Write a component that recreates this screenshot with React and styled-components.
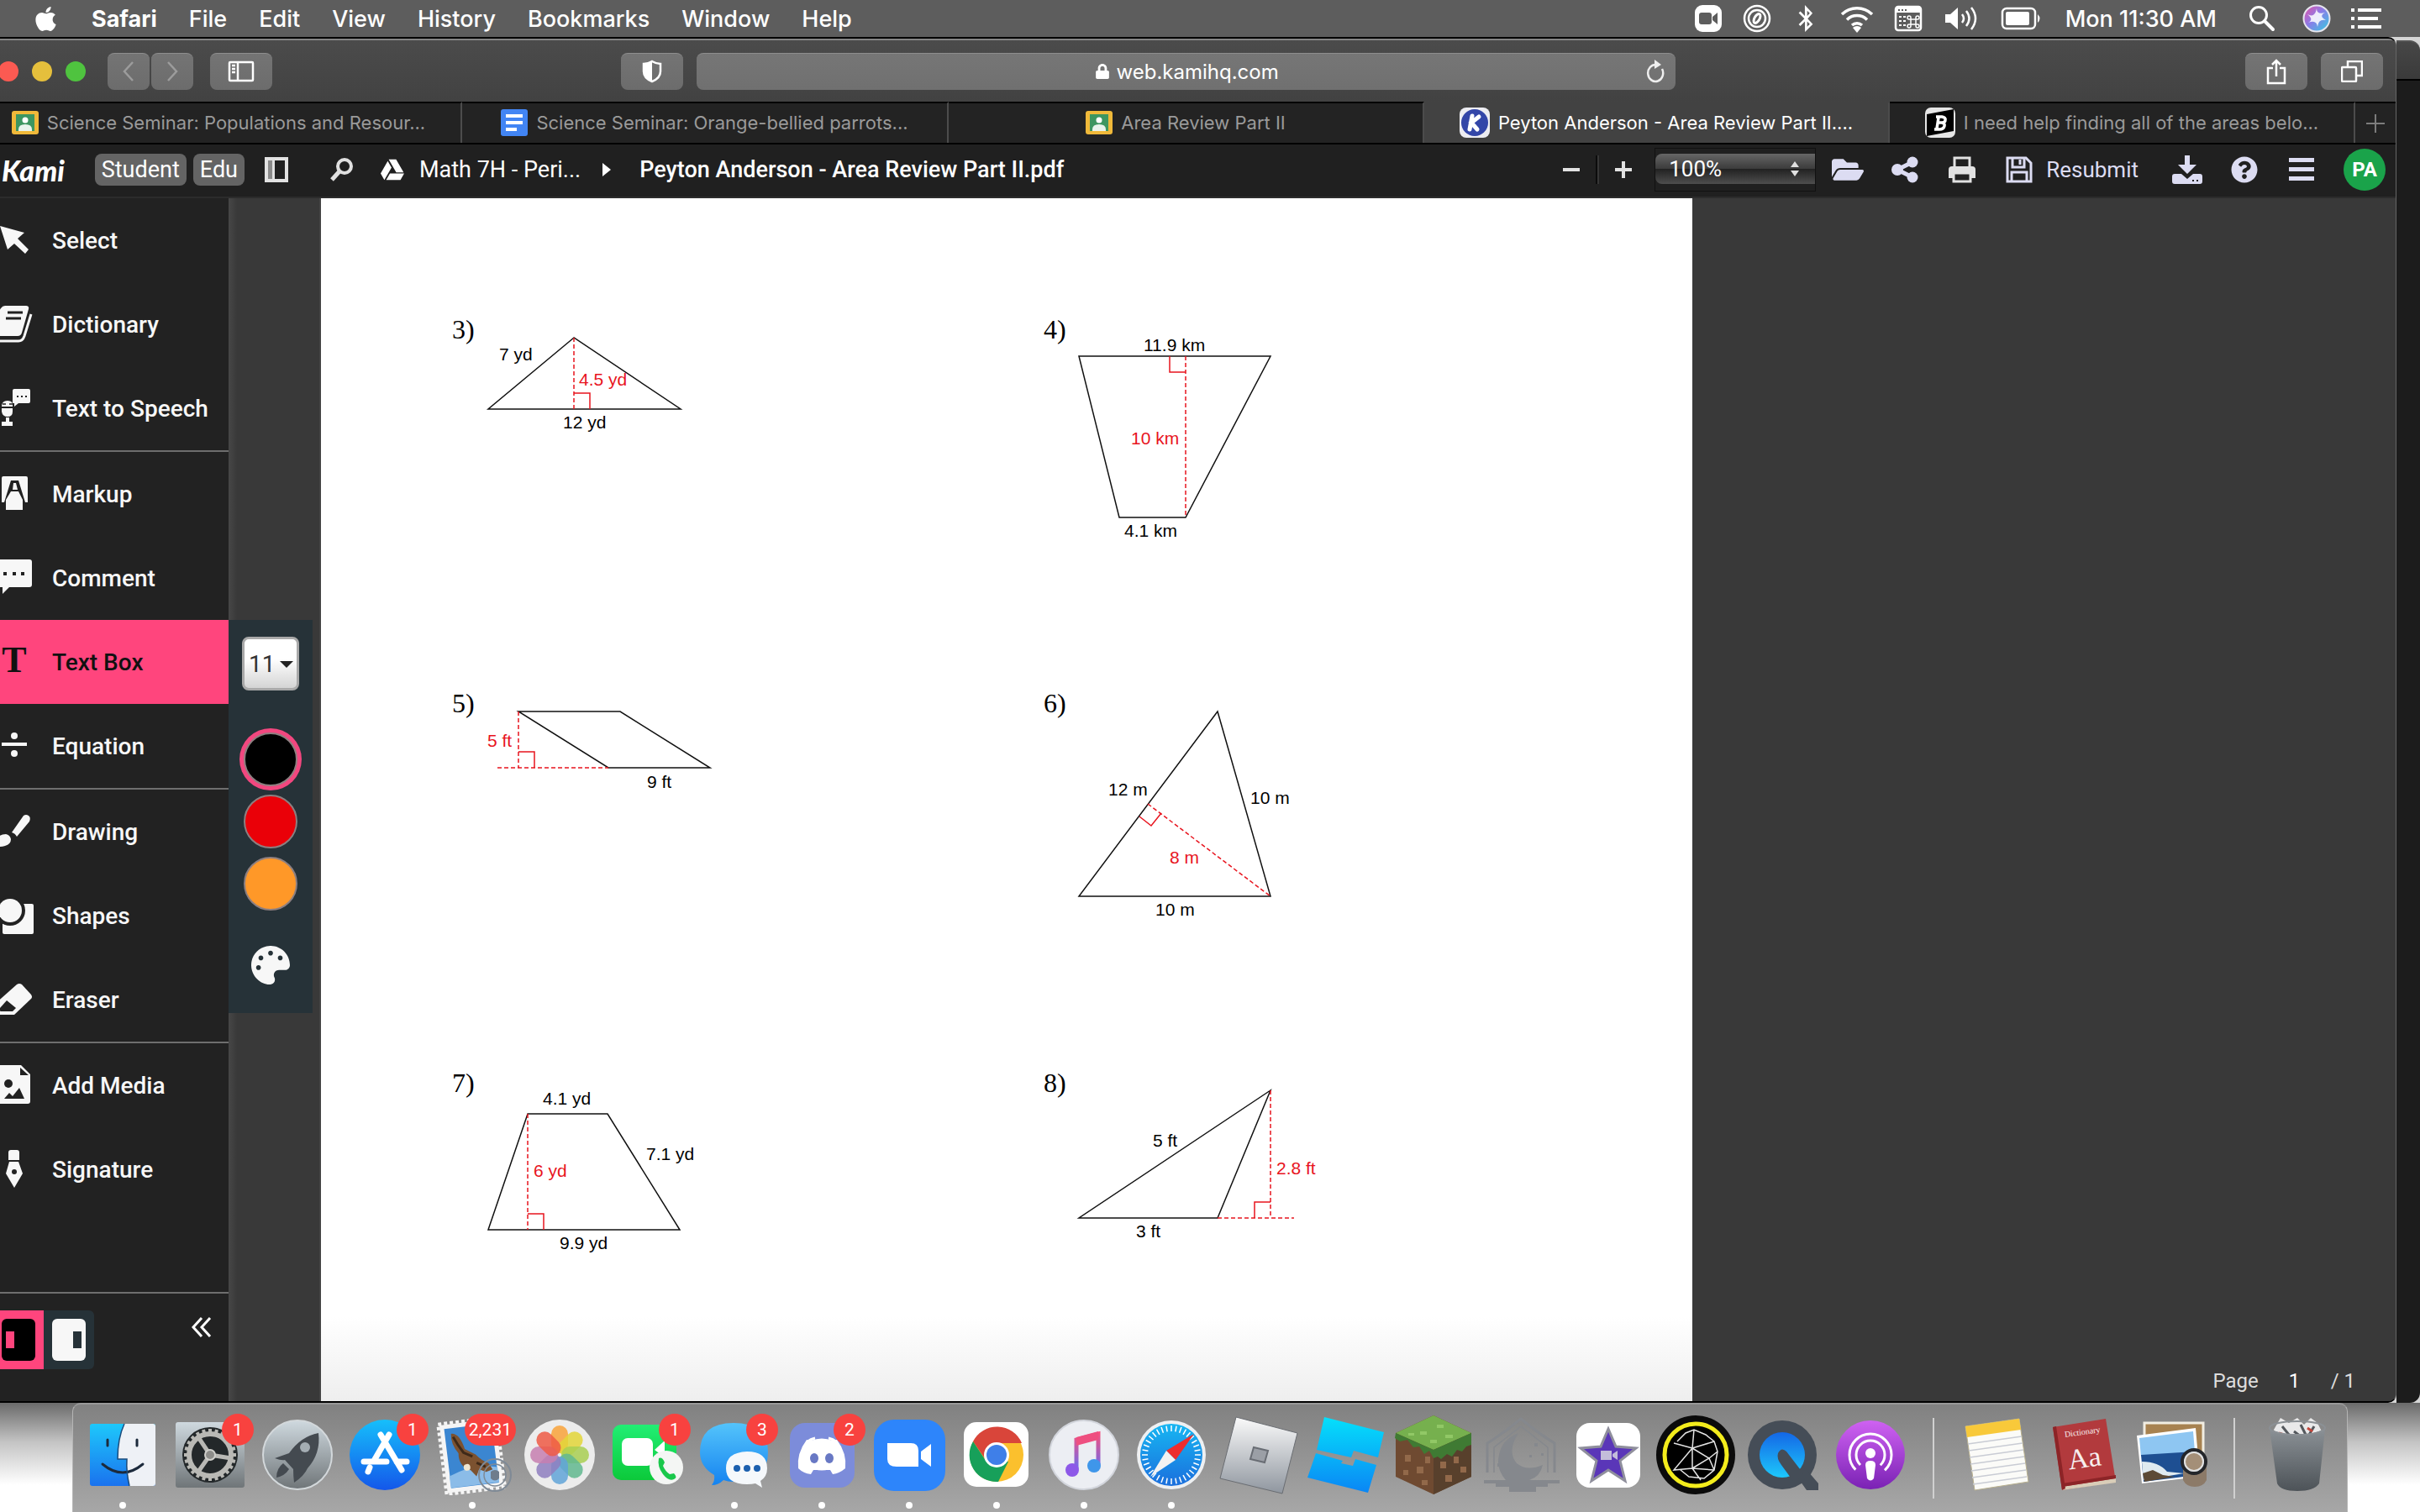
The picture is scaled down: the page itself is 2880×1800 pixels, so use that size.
import React, { useState } from "react";
import styled, { createGlobalStyle } from "styled-components";
import {
  FaApple,
  FaBluetoothB,
  FaFolderOpen,
  FaGoogleDrive,
  FaLock,
  FaPalette,
  FaQuestionCircle,
} from "react-icons/fa";

const MAC_FONT = `Inter, Roboto, sans-serif`;
const APP_FONT = `Roboto, "Liberation Sans", sans-serif`;

const GlobalStyle = createGlobalStyle`
  * {
    box-sizing: border-box;
  }
  body {
    margin: 0;
    background: #ffffff;
    overflow: hidden;
  }
  button, input, select {
    font: inherit;
    color: inherit;
    margin: 0;
    padding: 0;
    border: none;
    background: none;
  }
  a {
    color: inherit;
    text-decoration: none;
  }
  svg {
    display: block;
    flex-shrink: 0;
  }
`;

/* ---------- menu bar ---------- */

const menus = ["File", "Edit", "View", "History", "Bookmarks", "Window", "Help"];

function StatusIcons() {
  return (
    <StatusGroup>
      <svg width="34" height="34" viewBox="0 0 34 34">
        <rect x="1" y="1" width="32" height="32" rx="9" fill="#fff" />
        <rect x="6" y="10" width="15" height="14" rx="3" fill="#5d5d5d" />
        <path d="M22 15l6-5v14l-6-5z" fill="#5d5d5d" />
      </svg>
      <svg width="34" height="34" viewBox="0 0 34 34" fill="none" stroke="#fff">
        <circle cx="17" cy="17" r="15" strokeWidth="2.5" />
        <circle cx="17" cy="17" r="10" strokeWidth="2.5" />
        <ellipse cx="17" cy="17" rx="3" ry="6" strokeWidth="3" transform="rotate(30 17 17)" />
      </svg>
      <StatusSlot $w={34}>
        <FaBluetoothB size={32} />
      </StatusSlot>
      <svg width="40" height="34" viewBox="0 0 40 34" fill="none" stroke="#fff" strokeWidth="3.5">
        <path d="M2 12a26 26 0 0 1 36 0M8 18.500a17 17 0 0 1 24 0M14 25a9 9 0 0 1 12 0" />
        <path d="M20 34l-5-6a7 7 0 0 1 10 0z" fill="#fff" stroke="none" />
      </svg>
      <svg width="34" height="32" viewBox="3 0 34 32">
        <rect x="5" y="2" width="30" height="28" rx="3" fill="none" stroke="#fff" strokeWidth="2.500" />
        <path d="M5 3h30v6H5z" fill="#fff" />
        <path d="M8 5h2v2H8zM12 5h2v2h-2zM16 5h2v2h-2z" fill="#5d5d5d" />
        <path d="M9 13h3v2H9zM14 13h3v2h-3zM9 18h3v2H9zM14 18h3v2h-3zM9 23h3v2H9zM14 23h3v2h-3z" fill="#fff" />
        <path d="M23 17h6v6h-6zM23 17v-2a2 2 0 1 0-2 2zM29 17h2a2 2 0 1 0-2-2zM23 23h-2a2 2 0 1 0 2 2zM29 23v2a2 2 0 1 0 2-2z" fill="none" stroke="#fff" strokeWidth="1.500" />
      </svg>
      <svg width="44" height="34" viewBox="-2 0 44 34">
        <path d="M1 12h6l9-8v26l-9-8H1z" fill="#fff" />
        <path d="M21 12q4 5 0 10M26 8q7 9 0 18M32 4q10 13 0 26" fill="none" stroke="#fff" strokeWidth="2.500" />
      </svg>
      <svg width="54" height="28" viewBox="0 0 54 28">
        <rect x="3" y="2" width="39" height="24" rx="5" fill="none" stroke="#fff" strokeWidth="2.500" />
        <rect x="7" y="6" width="28" height="16" rx="2" fill="#fff" />
        <path d="M45 9q5 5 0 10z" fill="#fff" />
      </svg>
      <time>Mon 11:30 AM</time>
      <svg width="54" height="34" viewBox="-2 0 54 34" fill="none" stroke="#fff" strokeWidth="3">
        <circle cx="24" cy="13" r="9.500" />
        <path d="M31 20l10 10" strokeWidth="4" strokeLinecap="round" />
      </svg>
      <svg width="34" height="34" viewBox="0 0 34 34">
        <defs>
          <linearGradient id="siri" x1="0" y1="0" x2="1" y2="1">
            <stop offset="0" stopColor="#e84ea0" />
            <stop offset="0.45" stopColor="#8c7be8" />
            <stop offset="1" stopColor="#2fd0e0" />
          </linearGradient>
        </defs>
        <circle cx="17" cy="17" r="15.500" fill="url(#siri)" stroke="#e6e6ee" strokeWidth="2" />
        <path d="M6 12q9 5 11-7 0 8 10 5-8 4 1 9-9-2-10 8-1-9-11-5 7-4-1-10z" fill="#fff" opacity="0.850" />
      </svg>
      <svg width="36" height="26" viewBox="0 0 36 26" fill="#fff">
        <path d="M0 1h4v4H0zM8 1h28v4H8zM0 11h4v4H0zM8 11h24v4H8zM0 21h4v4H0zM8 21h28v4H8z" />
      </svg>
    </StatusGroup>
  );
}

function MenuBar() {
  return (
    <MenuBarWrap>
      <FaApple size={33} />
      <AppName>Safari</AppName>
      {menus.map((name) => (
        <MenuButton key={name}>{name}</MenuButton>
      ))}
      <StatusIcons />
    </MenuBarWrap>
  );
}

/* ---------- browser toolbar and tabs ---------- */

function ClassroomIcon() {
  return (
    <svg width="32" height="32" viewBox="0 0 32 32">
      <rect y="2" width="32" height="28" rx="3" fill="#f0b93a" />
      <rect x="5" y="6" width="22" height="20" fill="#3d9660" />
      <circle cx="16" cy="13" r="3.500" fill="#fff" />
      <path d="M8 24q0-6 8-6t8 6v2H8z" fill="#e8f3ec" />
    </svg>
  );
}

function DocsIcon() {
  return (
    <svg width="32" height="32" viewBox="0 0 32 32">
      <rect width="32" height="32" rx="3" fill="#4285f4" />
      <path d="M6 6h20v4H6zM6 14h20v4H6zM6 22h13v4H6z" fill="#fff" />
    </svg>
  );
}

function KamiIcon() {
  return (
    <svg width="36" height="36" viewBox="0 0 36 36">
      <rect width="36" height="36" rx="8" fill="#ededf2" />
      <circle cx="18" cy="18" r="16" fill="#3346a8" />
      <path d="M15 10l-3 16M23 11l-9 7 7 8" fill="none" stroke="#fff" strokeWidth="5" strokeLinecap="round" />
    </svg>
  );
}

function BrainlyIcon() {
  return (
    <svg width="36" height="36" viewBox="0 0 36 36">
      <rect width="36" height="36" rx="7" fill="#e6e6e6" />
      <path d="M2 8l32-6v26l-32 6z" fill="#000" />
      <path d="M13 11h7q5 1 4 4 0 3-4 3 4 1 3 4-1 4-6 4h-6M16 12l-2 13M16 18h5" fill="none" stroke="#fff" strokeWidth="3.500" />
    </svg>
  );
}

const tabs = [
  { title: "Science Seminar: Populations and Resour...", icon: ClassroomIcon },
  { title: "Science Seminar: Orange-bellied parrots...", icon: DocsIcon },
  { title: "Area Review Part II", icon: ClassroomIcon },
  { title: "Peyton Anderson - Area Review Part II....", icon: KamiIcon, active: true },
  { title: "I need help finding all of the areas belo...", icon: BrainlyIcon },
];

function BrowserToolbar() {
  return (
    <ToolbarWrap>
      <Lights>
        <Light $color="#fb5a52" aria-label="Close" />
        <Light $color="#e5bf3c" aria-label="Minimize" />
        <Light $color="#4fc33f" aria-label="Zoom" />
      </Lights>
      <NavPair>
        <ToolButton $w={50} aria-label="Back">
          <svg width="16" height="24" viewBox="0 0 16 24" fill="none" stroke="#9c9c9c" strokeWidth="2.500">
            <path d="M13 1L3 12l10 11" />
          </svg>
        </ToolButton>
        <ToolButton $w={50} aria-label="Forward">
          <svg width="16" height="24" viewBox="0 0 16 24" fill="none" stroke="#9c9c9c" strokeWidth="2.500">
            <path d="M3 1l10 11L3 23" />
          </svg>
        </ToolButton>
      </NavPair>
      <ToolButton $w={74} aria-label="Sidebar">
        <svg width="32" height="26" viewBox="0 0 32 26" fill="none" stroke="#fff" strokeWidth="2.500">
          <rect x="2" y="2" width="28" height="22" rx="1" />
          <path d="M12 2v22M5 6h4M5 10h4M5 14h4" />
        </svg>
      </ToolButton>
      <AddressGroup>
        <ToolButton $w={74} aria-label="Privacy report">
          <svg width="26" height="28" viewBox="0 0 26 28">
            <path d="M13 2q5 3 10 3v9q0 8-10 12Q3 22 3 14V5q5 0 10-3z" fill="none" stroke="#fff" strokeWidth="2.500" />
            <path d="M13 2v24Q3 22 3 14V5q5 0 10-3z" fill="#fff" />
          </svg>
        </ToolButton>
        <AddressBar>
          <FaLock size={18} />
          <AddressInput aria-label="Address" defaultValue="web.kamihq.com" />
          <ReloadButton aria-label="Reload">
            <svg width="24" height="28" viewBox="0 0 24 28">
              <path d="M20 11a9 10 0 1 1-7-5" fill="none" stroke="#eee" strokeWidth="2.500" />
              <path d="M11 0l8 6-8 5z" fill="#eee" />
            </svg>
          </ReloadButton>
        </AddressBar>
      </AddressGroup>
      <EndGroup>
        <ToolButton $w={74} aria-label="Share">
          <svg width="24" height="32" viewBox="0 0 24 32" fill="none" stroke="#fff" strokeWidth="2.500">
            <path d="M8 12H2v18h20V12h-6M12 22V3M7 8l5-5 5 5" />
          </svg>
        </ToolButton>
        <ToolButton $w={74} aria-label="Show all tabs">
          <svg width="26" height="26" viewBox="0 0 26 26" fill="none" stroke="#fff" strokeWidth="2.500">
            <rect x="1" y="8" width="17" height="17" rx="1" />
            <path d="M8 8V1h17v17h-6" />
          </svg>
        </ToolButton>
      </EndGroup>
    </ToolbarWrap>
  );
}

function TabStrip() {
  return (
    <TabStripWrap>
      {tabs.map(({ title, icon: Icon, active }, i) => (
        <Tab key={i} $active={active}>
          <Icon />
          <span>{title}</span>
        </Tab>
      ))}
      <NewTab aria-label="New tab">
        <svg width="24" height="24" viewBox="0 0 24 24" stroke="#7c7c7c" strokeWidth="2">
          <path d="M12 1v22M1 12h22" />
        </svg>
      </NewTab>
    </TabStripWrap>
  );
}

/* ---------- Kami header ---------- */

function KamiHeader() {
  return (
    <HeaderWrap>
      <Logo href="#home">Kami</Logo>
      <Chips>
        <Chip>Student</Chip>
        <Chip>Edu</Chip>
      </Chips>
      <HeaderButton aria-label="Toggle panel">
        <svg width="28" height="30" viewBox="0 0 28 30">
          <rect x="2" y="2" width="24" height="26" fill="none" stroke="#e2e2e2" strokeWidth="4" />
          <path d="M4 4h5v22H4z" fill="#8a8a8a" />
          <path d="M9 3h3v24H9z" fill="#e2e2e2" />
        </svg>
      </HeaderButton>
      <FileCrumbs>
        <HeaderButton aria-label="Search">
          <svg width="28" height="28" viewBox="0 0 28 28" fill="none" stroke="#e0e0e0" strokeWidth="4">
            <circle cx="17" cy="10" r="8" />
            <path d="M11 16L2 26" strokeWidth="5" />
          </svg>
        </HeaderButton>
        <FolderLink href="#folder">
          <FaGoogleDrive size={28} />
          Math 7H - Peri...
        </FolderLink>
        <svg width="10" height="16" viewBox="0 0 10 16" fill="#fff">
          <path d="M0 0l10 8-10 8z" />
        </svg>
        <FileName>Peyton Anderson - Area Review Part II.pdf</FileName>
      </FileCrumbs>
      <HeaderEnd>
        <ZoomGroup>
          <HeaderButton aria-label="Zoom out">
            <svg width="24" height="24" viewBox="0 0 24 24" fill="#e2e2e2">
              <path d="M2 10h20v4H2z" />
            </svg>
          </HeaderButton>
          <ZoomRule />
          <HeaderButton aria-label="Zoom in">
            <svg width="24" height="24" viewBox="0 0 24 24" fill="#e2e2e2">
              <path d="M2 10h8V2h4v8h8v4h-8v8h-4v-8H2z" />
            </svg>
          </HeaderButton>
          <ZoomSelectWrap>
            <ZoomSelect aria-label="Zoom level" defaultValue="100%">
              <option>100%</option>
              <option>150%</option>
            </ZoomSelect>
            <ZoomArrows width="12" height="18" viewBox="0 0 12 18" fill="#e0e0e0">
              <path d="M1 7l5-7 5 7zM1 11l5 7 5-7z" />
            </ZoomArrows>
          </ZoomSelectWrap>
        </ZoomGroup>
        <IconSlot aria-label="Open file">
          <FaFolderOpen size={38} />
        </IconSlot>
        <IconSlot aria-label="Share">
          <svg width="32" height="32" viewBox="0 0 32 32" fill="currentColor">
            <circle cx="7" cy="16" r="7" />
            <circle cx="25" cy="7" r="6.500" />
            <circle cx="25" cy="25" r="6.500" />
            <path d="M25 7L7 16l18 9" fill="none" stroke="currentColor" strokeWidth="5" />
          </svg>
        </IconSlot>
        <IconSlot aria-label="Print">
          <svg width="34" height="32" viewBox="0 0 34 32">
            <path d="M8 14V2h18v12" fill="none" stroke="#e2e2e2" strokeWidth="3" />
            <path d="M1 16q0-4 4-4h24q4 0 4 4v10H1z" fill="#e2e2e2" />
            <path d="M7 20h20v10H7z" fill="#222" stroke="#e2e2e2" strokeWidth="3" />
          </svg>
        </IconSlot>
        <SaveButton>
          <svg width="32" height="32" viewBox="0 0 32 32" fill="none" stroke="currentColor" strokeWidth="3">
            <path d="M2 2h22l6 6v22H2z" />
            <path d="M8 2v11h14V2M17 4v6M7 30V19h18v11" />
          </svg>
          Resubmit
        </SaveButton>
        <IconSlot aria-label="Download">
          <svg width="36" height="34" viewBox="0 0 36 34" fill="currentColor">
            <path d="M15 0h6v11h8L18 22 7 11h8z" />
            <path fillRule="evenodd" d="M3 22h8l7 6 7-6h8q3 0 3 3v6q0 3-3 3H3q-3 0-3-3v-6q0-3 3-3zM24 29v2h2v-2zM29 29v2h2v-2z" />
          </svg>
        </IconSlot>
        <IconSlot aria-label="Help">
          <FaQuestionCircle size={32} />
        </IconSlot>
        <IconSlot aria-label="Menu">
          <svg width="32" height="28" viewBox="0 0 32 28" fill="currentColor">
            <path d="M1 0h30v5H1zM1 11h30v5H1zM1 22h30v5H1z" />
          </svg>
        </IconSlot>
        <Avatar>PA</Avatar>
      </HeaderEnd>
    </HeaderWrap>
  );
}

/* ---------- sidebar ---------- */

const toolGlyphs = {
  Select: <path d="M0-17L29-9 21-2 34 11 30 16 17 4 9 11z" />,
  Dictionary: (
    <>
      <path d="M6-22h25q4 0 3 4L26 10q-1 4-5 4H-6v-22l7-11q2-3 5-3z" />
      <path d="M37-12L29 14q-2 6-7 6H-6" fill="none" stroke="#f7f7f7" strokeWidth="3" />
      <path d="M9-14h18M7-7h18" stroke="#222" strokeWidth="3" />
    </>
  ),
  "Text to Speech": (
    <>
      <path d="M17-23h17q2 0 2 2v13q0 2-2 2H22l-5 4v-4h-2v-15q0-2 2-2z" />
      <path d="M20-15h2v2h-2zM25-15h2v2h-2zM30-15h2v2h-2z" fill="#222" />
      <path d="M2-2q0-7 7-7t6 7zM2 0h13v4q0 6-6 6T2 4zM7 11h4v5h4v5H2v-5h5z" />
      <path d="M3-5h4M11-5h4" stroke="#222" strokeWidth="1.500" />
    </>
  ),
  Markup: (
    <>
      <path d="M4-21h27q2 0 2 2v29h-3L22-16h-9L5 10H2v-29q0-2 2-2z" />
      <path d="M15-5l1-8h3l2 8zM13-3h9l5 10v12H7V7z" />
    </>
  ),
  Comment: (
    <>
      <path d="M-6-22h41q3 0 3 3V8q0 3-3 3H11L3 19v-8h-9z" />
      <path d="M4-7h4v4H4zM15-7h4v4h-4zM25-7h4v4h-4z" fill="#222" />
    </>
  ),
  "Text Box": (
    <text x="17" y="12" textAnchor="middle" fontFamily="Liberation Serif, serif" fontWeight="700" fontSize="44">
      T
    </text>
  ),
  Equation: (
    <>
      <path d="M2-4h30v4H2z" />
      <circle cx="17" cy="-12" r="4" />
      <circle cx="17" cy="9" r="4" />
    </>
  ),
  Drawing: (
    <>
      <path d="M28-19q3-2 6 0t1 7L20 6q-2-4-6-5z" />
      <path d="M7 3q5 1 6 6 0 6-7 8t-14 0q3-3 4-8t11-6z" />
    </>
  ),
  Shapes: (
    <>
      <rect x="3" y="-14" width="37" height="36" rx="2" />
      <circle cx="12" cy="-6" r="18" fill="#222" />
      <circle cx="12" cy="-6" r="14" />
    </>
  ),
  Eraser: (
    <>
      <path d="M20-18q3-2 6 0l11 12q2 3 0 5L17 18H-4l-2-3V5z" />
      <path d="M8 1l11 9-4 4H1q-3-1-2-3z" fill="#222" />
    </>
  ),
  "Add Media": (
    <>
      <path d="M-6-24h31l11 11v32q0 3-3 3H-6z" />
      <path d="M24-21l10 9H24zM5 16l6-7 4 4 8-10 6 13z" fill="#222" />
      <circle cx="10" cy="-2" r="5" fill="#222" />
    </>
  ),
  Signature: (
    <>
      <path d="M13-23h7q3 0 3 3v9H10v-9q0-3 3-3zM11-9h11l5 14-10 17L7 5z" />
      <circle cx="17" cy="3" r="3" fill="#222" />
    </>
  ),
};

const toolGroups = [
  ["Select", "Dictionary", "Text to Speech"],
  ["Markup", "Comment", "Text Box", "Equation"],
  ["Drawing", "Shapes", "Eraser"],
  ["Add Media", "Signature"],
];

const swatches = [
  { name: "Black", color: "#000000" },
  { name: "Red", color: "#ea0008" },
  { name: "Orange", color: "#ff9828" },
];

function TextBoxOptions() {
  const [color, setColor] = useState("Black");

  return (
    <OptionsPanel>
      <SizeSelectWrap>
        <SizeSelect aria-label="Font size" defaultValue="11">
          <option>11</option>
          <option>12</option>
        </SizeSelect>
        <SizeCaret width="16" height="8" viewBox="0 0 16 8" fill="#222">
          <path d="M0 0h16L8 8z" />
        </SizeCaret>
      </SizeSelectWrap>
      <Swatches>
        {swatches.map((s) => (
          <Swatch
            key={s.name}
            aria-label={s.name}
            $color={s.color}
            $selected={color === s.name}
            onClick={() => setColor(s.name)}
          />
        ))}
      </Swatches>
      <button aria-label="More colours">
        <FaPalette size={46} color="#f7f7f7" />
      </button>
    </OptionsPanel>
  );
}

function Sidebar() {
  const [tool, setTool] = useState("Text Box");

  return (
    <SidebarWrap>
      {toolGroups.map((group) => (
        <ToolGroup key={group[0]}>
          {group.map((name) => (
            <ToolRow key={name}>
              <Tool $active={tool === name} onClick={() => setTool(name)}>
                <svg width="48" height="48" viewBox="-6 -24 48 48" fill="currentColor">
                  {toolGlyphs[name]}
                </svg>
                {name}
              </Tool>
              {name === "Text Box" && <TextBoxOptions />}
            </ToolRow>
          ))}
        </ToolGroup>
      ))}
      <SidebarFooter>
        <SideSwitch>
          <SideButton $w={80} $color="#ff457d" aria-label="Dock left">
            <svg width="40" height="50" viewBox="0 0 40 50">
              <rect width="40" height="50" rx="6" fill="#000" />
              <rect x="5" y="15" width="10" height="20" fill="#ff457d" />
            </svg>
          </SideButton>
          <SideButton $w={60} $color="#263238" aria-label="Dock right">
            <svg width="40" height="50" viewBox="0 0 40 50">
              <rect width="40" height="50" rx="6" fill="#f7f7f7" />
              <rect x="25" y="15" width="10" height="20" fill="#263238" />
            </svg>
          </SideButton>
        </SideSwitch>
        <CollapseButton aria-label="Collapse">
          <svg width="24" height="24" viewBox="0 0 24 24" fill="none" stroke="#fff" strokeWidth="3">
            <path d="M12 1L2 12l10 11M22 1L12 12l10 11" />
          </svg>
        </CollapseButton>
      </SidebarFooter>
    </SidebarWrap>
  );
}

/* ---------- worksheet ---------- */

// shapes and labels share one coordinate plane; each view box cuts out its own figure
const questions = [
  {
    number: "3)",
    origin: [574, 375],
    outline: "M683 402L581 487H810z",
    dashed: "M683 402V487",
    square: "M683 468H702V487",
    labels: [["7 yd", 594, 429], ["4.5 yd", 689, 459, true], ["12 yd", 670, 510]],
  },
  {
    number: "4)",
    origin: [1278, 375],
    outline: "M1284 424H1512L1411 616H1332z",
    dashed: "M1411 424V616",
    square: "M1392 424V443H1411",
    labels: [["11.9 km", 1361, 418], ["10 km", 1346, 529, true], ["4.1 km", 1338, 639]],
  },
  {
    number: "5)",
    origin: [574, 820],
    outline: "M617 847H738L845 914H724z",
    dashed: "M617 847V914M592 914H724",
    square: "M617 895H636V914",
    labels: [["5 ft", 580, 889, true], ["9 ft", 770, 938]],
  },
  {
    number: "6)",
    origin: [1278, 820],
    outline: "M1449 847L1284 1067H1512z",
    dashed: "M1366 957L1512 1067",
    square: "M1356 972L1370 983 1382 968",
    labels: [["12 m", 1319, 947], ["10 m", 1488, 957], ["8 m", 1392, 1028, true], ["10 m", 1375, 1090]],
  },
  {
    number: "7)",
    origin: [574, 1272],
    outline: "M628 1326H723L809 1464H581z",
    dashed: "M628 1326V1464",
    square: "M628 1445H647V1464",
    labels: [["4.1 yd", 646, 1315], ["7.1 yd", 769, 1381], ["6 yd", 635, 1401, true], ["9.9 yd", 666, 1487]],
  },
  {
    number: "8)",
    origin: [1278, 1272],
    outline: "M1512 1298L1284 1450H1449z",
    dashed: "M1512 1298V1450M1449 1450H1540",
    square: "M1493 1450V1431H1512",
    labels: [["5 ft", 1372, 1365], ["2.8 ft", 1519, 1398, true], ["3 ft", 1352, 1473]],
  },
];

function Question({ number, origin, outline, dashed, square, labels }) {
  return (
    <QuestionWrap>
      <QuestionNumber>{number}</QuestionNumber>
      <svg width="320" height="290" viewBox={`${origin[0]} ${origin[1]} 320 290`} fill="none">
        <path d={outline} stroke="#111" strokeWidth="1.500" />
        <path d={dashed} stroke="#e8141e" strokeWidth="1.500" strokeDasharray="5 3" />
        <path d={square} stroke="#e8141e" strokeWidth="1.500" />
        {labels.map(([text, x, y, red]) => (
          <FigureLabel key={text + y} x={x} y={y} $red={red}>
            {text}
          </FigureLabel>
        ))}
      </svg>
    </QuestionWrap>
  );
}

function Viewer() {
  return (
    <ViewerWrap>
      <Gutter />
      <Sheet>
        {questions.map((q) => (
          <Question key={q.number} {...q} />
        ))}
      </Sheet>
      <Backdrop>
        <PageCounter>
          <label htmlFor="page">Page</label>
          <PageInput id="page" defaultValue="1" />
          <span>/ 1</span>
        </PageCounter>
      </Backdrop>
    </ViewerWrap>
  );
}

/* ---------- dock ---------- */

const petals = ["#f9a33b", "#e3d63a", "#a9cf52", "#62b98f", "#62a4d8", "#8f7fc0", "#c77fb0", "#ee5b45"];
const ticks = Array.from({ length: 36 }, (_, i) => i * 10);
const teeth = Array.from({ length: 24 }, (_, i) => i * 15);

const art = {
  Finder: (
    <>
      <rect x="-39" y="-37" width="78" height="74" rx="3" fill="url(#finder)" />
      <path d="M2-37h34q3 0 3 3v68q0 3-3 3H8Q4 20 5 5H-6Q-6-20 2-37z" fill="#eef1f6" />
      <path d="M-18-18v7M17-18v7" stroke="#1c2a3c" strokeWidth="3" strokeLinecap="round" />
      <path d="M-24 11Q0 31 24 11" fill="none" stroke="#1c2a3c" strokeWidth="3" strokeLinecap="round" />
      <path d="M2-37Q-6-20-6 5H5Q4 20 8 37" fill="none" stroke="#1b4c7c" strokeWidth="1.500" />
    </>
  ),
  "System Preferences": (
    <>
      <rect x="-41" y="-39" width="82" height="78" rx="3" fill="url(#steel)" />
      <circle r="33" fill="#23282a" />
      <circle r="25" fill="none" stroke="#b9b9b5" strokeWidth="6" />
      {teeth.map((a) => (
        <path key={a} d="M-2-31h4v5h-4z" fill="#b9b9b5" transform={`rotate(${a})`} />
      ))}
      <path d="M0 0L25 4M0 0L-14-21M0 0L-14 20" stroke="#b9b9b5" strokeWidth="5" />
      <circle r="6" fill="#8d8d8a" stroke="#d0d0cc" strokeWidth="2" />
    </>
  ),
  Launchpad: (
    <>
      <circle r="41" fill="url(#steel)" stroke="#d3d8db" strokeWidth="2" />
      <path d="M25-26Q4-22-10-2l-17 6q8 3 12 2l10 11q0 8 1 16Q8 25 12 16 28-2 25-26z" fill="#444a50" />
      <path d="M-17 10q-8 6-8 17 10-2 15-10z" fill="#444a50" />
      <circle cx="9" cy="-9" r="6" fill="#a4adb3" />
    </>
  ),
  "App Store": (
    <>
      <circle r="42" fill="url(#store)" />
      <path d="M-5-24L20 18M5-24L-13 7M-18 15l-2 5M-25 8H2M14 8h12" stroke="#fff" strokeWidth="7" strokeLinecap="round" />
    </>
  ),
  Mail: (
    <>
      <g transform="rotate(-7)">
        <rect x="-32" y="-37" width="62" height="76" fill="#3b86d1" stroke="#f5f5f5" strokeWidth="5" />
        <rect x="-36" y="-41" width="70" height="84" fill="none" stroke="#f5f5f5" strokeWidth="4" strokeDasharray="4 3" />
        <path d="M-30 22q30-12 58-4v18h-58z" fill="#8bbce8" />
        <path d="M-22-28q10 0 14 20l12 8q6 8 14 12l4 8-8 2-8-4-4 8-6-8q-14-6-12-22-8-12-6-24z" fill="#7c5230" />
        <path d="M-20-24q4 10 10 20l10 6M4 10l10 6" stroke="#3e2918" strokeWidth="3" fill="none" />
        <circle cx="-8" cy="14" r="4" fill="#f0e6d0" />
      </g>
      <circle cx="27" cy="24" r="19" fill="none" stroke="#7f8a96" strokeWidth="2" />
      <circle cx="27" cy="24" r="13" fill="none" stroke="#7f8a96" strokeWidth="1.500" />
      <path d="M22 20q5-4 10 0v8q-5 5-10 0z" fill="#6f7d8c" />
    </>
  ),
  Photos: (
    <>
      <circle r="42" fill="#ececec" />
      {petals.map((c, i) => (
        <rect key={c} x="-10" y="-35" width="20" height="33" rx="10" fill={c} opacity="0.850" transform={`rotate(${i * 45})`} />
      ))}
    </>
  ),
  FaceTime: (
    <>
      <rect x="-41" y="-36" width="76" height="66" rx="10" fill="url(#green)" />
      <rect x="-30" y="-20" width="37" height="33" rx="7" fill="#fff" />
      <path d="M9-6l12-11v20z" fill="#fff" />
      <circle cx="23" cy="15" r="20" fill="#f4f6f4" />
      <path d="M14 4q4-2 7 5l-2 4q3 7 8 10l5-1q5 5 0 7-6 3-13-6T14 4z" fill="#1ac84b" />
    </>
  ),
  Messages: (
    <>
      <path d="M-1-38q41 0 41 35T-1 32q-7 0-12-2-6 6-14 6 4-5 3-12-17-10-17-27 0-35 40-35z" fill="url(#message)" />
      <path d="M15-4q24 0 24 20 0 10-8 15l2 8-8-5q-4 1-10 1-25 0-25-19T15-4z" fill="#f5f8fb" />
      <circle cx="3" cy="16" r="4" fill="#1b5fae" />
      <circle cx="15" cy="16" r="4" fill="#1b5fae" />
      <circle cx="27" cy="16" r="4" fill="#1b5fae" />
    </>
  ),
  Discord: (
    <>
      <rect x="-38" y="-38" width="77" height="77" rx="18" fill="#7c8cda" />
      <path d="M-13-17q13-5 26 0l5-1q12 16 10 34-7 6-15 7l-3-5h-20l-3 5q-9-1-15-7-2-18 10-34z" fill="#fff" />
      <path d="M-18-15q5-4 10-5M18-15q-5-4-10-5M-16 13q16 8 32 0" stroke="#fff" strokeWidth="3" fill="none" />
      <ellipse cx="-9" cy="4" rx="5" ry="6" fill="#6878c4" />
      <ellipse cx="9" cy="4" rx="5" ry="6" fill="#6878c4" />
    </>
  ),
  Zoom: (
    <>
      <rect x="-42" y="-42" width="85" height="85" rx="24" fill="#2d85fb" />
      <path d="M-26-14H2q9 0 9 9v19h-26q-11 0-11-9zM14-4l12-9v27L14 5z" fill="#fff" />
    </>
  ),
  Chrome: (
    <>
      <rect x="-39" y="-39" width="77" height="77" rx="15" fill="#fff" />
      <circle r="32" fill="#fbc02d" />
      <path d="M-28-16A32 32 0 0 1 30-14H0L-12 7z" fill="#d9453a" />
      <path d="M-28-16A32 32 0 0 0 2 32L14 8-12 8z" fill="#17a05a" />
      <circle r="15" fill="#fff" />
      <circle r="12" fill="#3f7fe8" />
    </>
  ),
  Music: (
    <>
      <circle r="41" fill="#eceef3" stroke="#d2d5dc" strokeWidth="2" />
      <path d="M-9 17v-35l26-7v37" fill="none" stroke="url(#note)" strokeWidth="5" />
      <path d="M-9-21l26-7v10l-26 7z" fill="#ee4f80" />
      <circle cx="-14" cy="18" r="8" fill="#8d58e8" />
      <circle cx="12" cy="13" r="8" fill="#3f96ea" />
    </>
  ),
  Safari: (
    <>
      <circle r="41" fill="#eef0f2" />
      <circle r="37" fill="url(#safari)" />
      {ticks.map((a) => (
        <path key={a} d="M0-35v7" stroke="#fff" strokeWidth="1.500" transform={`rotate(${a})`} />
      ))}
      <path d="M27-25L5 6-6-5z" fill="#ee2d2d" />
      <path d="M-25 26L-6-5 5 6z" fill="#f2f2f2" />
    </>
  ),
  Roblox: (
    <>
      <path d="M-27-45L46-26 28 46-46 28z" fill="url(#silver)" stroke="#6a6d72" />
      <path d="M-6-9l17 4-4 14-17-4z" fill="#9b9fa6" stroke="#696d74" strokeWidth="2" />
    </>
  ),
  "Roblox Studio": (
    <path d="M-26-45L45-27 38 3 9-5 6 3-35-6zM-36-2L-4 7-6 10l14 3 3-8 25 7-10 33-72-18z" fill="url(#studio)" />
  ),
  Minecraft: (
    <>
      <path d="M0-47L45-26V26L0 47-45 26V-26z" fill="#6f4a31" />
      <path d="M0-7L45-26V26L0 47z" fill="#58402c" />
      <path d="M0-47L45-26 0-6-45-26z" fill="#76b04e" />
      <path d="M-45-26L0-6 45-26v14l-6 2-5 6-6-2-6 8-6-3-7 6-4-3-5 2-5-9-6 4-6-9-7 1-7-9-9 2-6-4z" fill="#3f7a33" />
      <path d="M-34 0h7v8h-7zM-20 14h8v8h-8zM-36 18h6v6h-6zM-10 2h6v8h-6zM8 8h7v8H8zM24 2h6v8h-6zM14 24h8v8h-8zM32 14h7v7h-7zM-14 30h7v6h-7z" fill="#92694a" />
      <path d="M-16-28h8v4h-8zM4-36h8v4H4zM14-24h9v4h-9zM-30-26h7v3h-7zM-4-18h8v4h-8z" fill="#91c866" />
    </>
  ),
  Sunset: (
    <g fill="#85888d">
      <path d="M-40 21v-35Q-20-26 0-43 20-26 40-14v35" fill="none" stroke="#85888d" strokeWidth="3" />
      <path d="M-32 21v-30Q-18-20 0-34 18-20 32-9v30" fill="none" stroke="#85888d" strokeWidth="1.500" />
      <path d="M-3-26q-14 22-2 36 12 10 31 2-3 14-16 18h36v4H32v4H18v6h-32v-6h-16v-4h-14v-4h26q-12-14-8-30 3-18 23-26z" />
      <path d="M16-14h4v4h-4zM24-2h3v3h-3zM10 0h3v3h-3zM-28 10h4v4h-4z" />
    </g>
  ),
  iMovie: (
    <>
      <rect x="-38" y="-38" width="76" height="77" rx="16" fill="#fff" />
      <path d="M0-31l9 21 24 2-19 15 6 24L0 18l-20 13 6-24-19-15 24-2z" fill="#5a36b8" stroke="#8f8f9c" strokeWidth="3" />
      <path d="M-9-5H4V6H-9zM5-1l6-4V6L5 2z" fill="#c3bdda" />
    </>
  ),
  Aperture: (
    <>
      <circle r="47" fill="#0b0b0b" />
      <circle r="37" fill="#000" stroke="#f3ec1c" strokeWidth="5" />
      <path d="M-26-14L-4-8 22-16M-4-8l2-22M-4-8l-22 26 22-2 26 2M-4-8L-4 16M-4-8l20 12M16 4l10-8M16 4l-20 12M16 4l6 14M-22-16l10-10 10-4 14 6 10 8 4 12-4 22-12 10-18-2-10-8M-4 16l10 14" fill="none" stroke="#e4e4e4" strokeWidth="1.500" />
    </>
  ),
  QuickTime: (
    <>
      <circle cx="-1" r="41" fill="#454d57" />
      <path d="M4 8l14-2 24 28v8H28z" fill="#454d57" />
      <circle cx="-1" r="27" fill="url(#quick)" />
      <path d="M-6-2q4-8 10-2l20 26-10 12L-2 12q-6-8-4-14z" fill="#454d57" />
    </>
  ),
  Podcasts: (
    <>
      <circle r="41" fill="url(#pod)" />
      <circle r="25" fill="none" stroke="#fff" strokeWidth="3" strokeDasharray="118 40" transform="rotate(135)" />
      <circle r="17" fill="none" stroke="#fff" strokeWidth="3" strokeDasharray="80 27" transform="rotate(135)" />
      <circle cy="-2" r="6" fill="#fff" />
      <path d="M-6 12q0-5 6-5t6 5l-2 16q-4 5-8 0z" fill="#fff" />
    </>
  ),
  Notes: (
    <>
      <path d="M-37-34L27-43 38 32-26 42z" fill="#fbfbf8" stroke="#b9b18f" />
      <path d="M-37-34L27-43l2 13-64 9z" fill="#f8c93a" />
      <path d="M-34-13l64-9M-33-5l64-9M-32 3l64-9M-31 11l64-9M-30 19l64-9M-29 27l64-9M-28 35l64-9" stroke="#c9ccd4" strokeWidth="1.500" />
    </>
  ),
  Dictionary: (
    <>
      <path d="M-37-33L26-43 38 32-26 42z" fill="#b23a3d" />
      <path d="M-26 38l64-10v5l-64 9z" fill="#d9cdb8" />
      <path d="M-26 34l64-10v4l-64 10zM-37-33l4-1 11 74-4 2z" fill="#8c2427" />
      <g transform="rotate(-8)" fontFamily="Liberation Serif, serif" textAnchor="middle" fill="#f7eeee">
        <text x="2" y="-24" fontSize="10">Dictionary</text>
        <text x="0" y="15" fontSize="34">Aa</text>
      </g>
    </>
  ),
  Preview: (
    <>
      <path d="M-32-38h70v52h-70z" fill="#a78250" stroke="#f1ede2" strokeWidth="3" />
      <path d="M-41-23L29-32 34 26-35 34z" fill="#fff" />
      <path d="M-38-20L26-28 28-4-36 2z" fill="#8ec6f2" />
      <path d="M-36 0l64-4 3 28-64 8z" fill="#1e4f92" />
      <path d="M-35 8q20 0 30 12l20 2-48 8z" fill="#dfeaf0" />
      <path d="M-34 22l12-4 12 6 14 2-36 6z" fill="#5c4a36" />
      <path d="M14 12h28v18q-4 8-14 8t-14-8z" fill="#8c7a68" />
      <circle cx="27" cy="8" r="14" fill="#8d98a4" stroke="#24262a" strokeWidth="4" />
      <circle cx="27" cy="8" r="11" fill="#a48f78" stroke="#e2e2e2" strokeWidth="2" />
    </>
  ),
  Trash: (
    <>
      <path d="M-28-30l8-14 10 6 10-6 8 8 8-8 8 6 6 12-4 8h-50z" fill="#e9e9ea" />
      <path d="M-18-34l8 10M4-36l6 12M-4-28l8 6M20-34l-6 10" stroke="#54585d" strokeWidth="3" />
      <path d="M12-32l6 4M-22-26l6 2" stroke="#c2473c" strokeWidth="3" />
      <path d="M-33-31Q0-16 33-31L26 34Q20 43 0 43T-24 34z" fill="url(#bin)" />
      <ellipse cy="-32" rx="33" ry="8" fill="none" stroke="#8b9095" strokeWidth="2" />
    </>
  ),
};

const dockItems = [
  { name: "Finder", running: true },
  { name: "System Preferences", badge: "1" },
  { name: "Launchpad" },
  { name: "App Store", badge: "1" },
  { name: "Mail", badge: "2,231", running: true },
  { name: "Photos" },
  { name: "FaceTime", badge: "1" },
  { name: "Messages", badge: "3", running: true },
  { name: "Discord", badge: "2", running: true },
  { name: "Zoom", running: true },
  { name: "Chrome", running: true },
  { name: "Music", running: true },
  { name: "Safari", running: true },
  { name: "Roblox" },
  { name: "Roblox Studio" },
  { name: "Minecraft" },
  { name: "Sunset" },
  { name: "iMovie" },
  { name: "Aperture" },
  { name: "QuickTime" },
  { name: "Podcasts" },
  { rule: true },
  { name: "Notes" },
  { name: "Dictionary" },
  { name: "Preview" },
  { rule: true },
  { name: "Trash" },
];

const gradients = [
  ["finder", "#1ec8fb", "#1a72ee"],
  ["steel", "#cfd9df", "#6f7578"],
  ["store", "#16bffb", "#1457ea"],
  ["green", "#22ee74", "#0cc93a"],
  ["message", "#54c4fb", "#1583f0"],
  ["note", "#f4517f", "#6a6cf0"],
  ["safari", "#17b6f2", "#1b6fdd"],
  ["silver", "#fafafa", "#8f969f"],
  ["studio", "#05e0fb", "#0a86f5"],
  ["quick", "#1467e6", "#1dc8fb"],
  ["pod", "#cf62f2", "#7a22b4"],
  ["bin", "#8b9196", "#4d5358"],
];

function Dock() {
  return (
    <DockArea>
      <Gradients width="0" height="0">
        <defs>
          {gradients.map(([id, from, to]) => (
            <linearGradient key={id} id={id} x1="0" y1="0" x2="0" y2="1">
              <stop offset="0" stopColor={from} />
              <stop offset="1" stopColor={to} />
            </linearGradient>
          ))}
        </defs>
      </Gradients>
      <DockShelf>
        {dockItems.map((item, i) =>
          item.rule ? (
            <DockRule key={i} />
          ) : (
            <DockItem key={item.name} aria-label={item.name}>
              <svg width="96" height="96" viewBox="-48 -48 96 96">
                {art[item.name]}
              </svg>
              {item.badge && <Badge>{item.badge}</Badge>}
              {item.running && <RunningDot />}
            </DockItem>
          )
        )}
      </DockShelf>
    </DockArea>
  );
}

export default function App() {
  return (
    <Desktop>
      <GlobalStyle />
      <MenuBar />
      <Workspace>
        <BrowserWindow>
          <BrowserToolbar />
          <TabStrip />
          <KamiHeader />
          <KamiBody>
            <Sidebar />
            <Viewer />
          </KamiBody>
        </BrowserWindow>
        <RearWindow />
      </Workspace>
      <Dock />
    </Desktop>
  );
}

const Desktop = styled.div`
  display: flex;
  flex-direction: column;
  height: 100vh;
  overflow: hidden;
  background: #ffffff;
  font-family: ${MAC_FONT};
`;

const MenuBarWrap = styled.nav`
  display: flex;
  align-items: center;
  gap: 38px;
  height: 44px;
  padding: 0 46px 0 38px;
  background: #5d5d5d;
  color: #ffffff;
  font-size: 27px;
  font-weight: 500;
`;

const AppName = styled.button`
  font-weight: 700;
`;

const MenuButton = styled.button`
  font-weight: 500;
`;

const StatusGroup = styled.div`
  display: flex;
  align-items: center;
  gap: 24px;
  margin-left: auto;
`;

const StatusSlot = styled.span`
  display: flex;
  justify-content: center;
  width: ${(p) => p.$w}px;
`;

const Workspace = styled.div`
  display: flex;
  flex: 1;
  min-height: 0;
  background: #d5d5d5;
`;

/* the window hangs a little over the left screen edge */
const BrowserWindow = styled.main`
  display: flex;
  flex-direction: column;
  flex: 1;
  min-width: 0;
  margin-left: -28px;
  border-top: 2px solid #000000;
  border-right: 1px solid #666666;
  border-bottom: 2px solid #000000;
  border-radius: 0 10px 10px 0;
  overflow: hidden;
  background: #393939;
`;

const RearWindow = styled.div`
  width: 28px;
  margin-top: 4px;
  border-top: 2px solid #555555;
  border-radius: 0 12px 12px 0;
  background: linear-gradient(#474747 0, #3a3a3a 44px, #000000 44px, #000000 46px, #1c1c1c 46px);
`;

const ToolbarWrap = styled.header`
  display: flex;
  align-items: center;
  height: 75px;
  padding: 0 15px 0 26px;
  border-top: 2px solid #858585;
  background: linear-gradient(#4b4b4b, #424242);
  color: #ffffff;
`;

const Lights = styled.div`
  display: flex;
  gap: 16px;
  margin-right: 26px;
`;

const Light = styled.button`
  width: 24px;
  height: 24px;
  border-radius: 50%;
  background: ${(p) => p.$color};
`;

const NavPair = styled.div`
  display: flex;
  gap: 2px;
  margin-right: 20px;
`;

const ToolButton = styled.button`
  display: flex;
  align-items: center;
  justify-content: center;
  width: ${(p) => p.$w}px;
  height: 44px;
  border-top: 1px solid #8e8e8e;
  border-radius: 8px;
  background: linear-gradient(#747474, #6c6c6c);
`;

const AddressGroup = styled.div`
  display: flex;
  flex: 1;
  gap: 16px;
  padding: 0 678px 0 415px;
`;

const AddressBar = styled.div`
  position: relative;
  display: flex;
  flex: 1;
  align-items: center;
  justify-content: center;
  gap: 8px;
  height: 44px;
  border-top: 1px solid #8e8e8e;
  border-radius: 8px;
  background: linear-gradient(#767676, #707070);
  font-size: 24px;
`;

const AddressInput = styled.input`
  width: 192px;
  outline: none;
`;

const ReloadButton = styled.button`
  position: absolute;
  right: 12px;
`;

const EndGroup = styled.div`
  display: flex;
  gap: 16px;
`;

const TabStripWrap = styled.div`
  display: grid;
  grid-template-columns: 578fr 579fr 566fr 554fr 554fr 48px;
  height: 51px;
  border-bottom: 2px solid #000000;
  background: #232323;
  color: #9a9a9a;
  font-size: 22px;
`;

const Tab = styled.button`
  display: flex;
  align-items: center;
  justify-content: center;
  gap: 10px;
  min-width: 0;
  padding-bottom: 2px;
  border-top: 2px solid ${(p) => (p.$active ? "#424242" : "#000000")};
  border-right: 2px solid #4c4c4c;
  background: ${(p) => (p.$active ? "#424242" : "#232323")};
  color: ${(p) => (p.$active ? "#ffffff" : "#9a9a9a")};
  white-space: nowrap;
`;

const NewTab = styled.button`
  display: flex;
  align-items: center;
  justify-content: center;
  border-top: 2px solid #000000;
`;

const HeaderWrap = styled.header`
  display: flex;
  align-items: center;
  height: 64px;
  padding: 0 12px 2px 30px;
  border-bottom: 2px solid #2c2c2c;
  background: #202020;
  color: #ffffff;
  font-family: ${APP_FONT};
  font-size: 27px;
`;

const Logo = styled.a`
  margin-right: 36px;
  font-family: Lato, sans-serif;
  font-size: 34px;
  font-style: italic;
  font-weight: 900;
`;

const Chips = styled.div`
  display: flex;
  gap: 8px;
  margin-right: 24px;
`;

const Chip = styled.span`
  height: 38px;
  padding: 0 8px;
  border-radius: 8px;
  background: #646464;
  line-height: 38px;
`;

const HeaderButton = styled.button`
  display: flex;
  align-items: center;
  justify-content: center;
`;

const FileCrumbs = styled.div`
  display: flex;
  align-items: center;
  margin-left: 50px;
  white-space: nowrap;
`;

const FolderLink = styled.a`
  display: flex;
  align-items: center;
  gap: 18px;
  margin: 0 26px 0 32px;
`;

const FileName = styled.span`
  margin-left: 34px;
  font-weight: 500;
`;

const HeaderEnd = styled.div`
  display: flex;
  align-items: center;
  gap: 32px;
  margin-left: auto;
  color: #dcdcf2;
`;

const ZoomGroup = styled.div`
  display: flex;
  align-items: center;
  gap: 17px;
  margin-right: -12px;
`;

const ZoomRule = styled.span`
  width: 4px;
  height: 34px;
  border-left: 2px solid #0c0c0c;
  border-right: 2px solid #363636;
`;

const ZoomSelectWrap = styled.div`
  position: relative;
  margin-left: 8px;
  padding: 6px 0 8px;
  border: 1px solid #111111;
`;

const ZoomSelect = styled.select`
  appearance: none;
  width: 190px;
  height: 36px;
  padding-left: 16px;
  border-radius: 8px 0 0 8px;
  background: linear-gradient(#666666, #3c3c3c 49%, #222222 51%, #4e4e4e);
  color: #ffffff;
  font-size: 26px;
  line-height: 36px;
`;

const ZoomArrows = styled.svg`
  position: absolute;
  top: 15px;
  right: 18px;
  pointer-events: none;
`;

const IconSlot = styled.button`
  display: flex;
  align-items: center;
  justify-content: center;
  width: 36px;
  height: 40px;
`;

const SaveButton = styled.button`
  display: flex;
  align-items: center;
  gap: 16px;
  padding: 0 8px 0 2px;
  font-size: 26px;
`;

const Avatar = styled.button`
  width: 50px;
  height: 50px;
  border-radius: 50%;
  background: #1aa34a;
  color: #ffffff;
  font-size: 24px;
  font-weight: 700;
`;

const KamiBody = styled.div`
  display: flex;
  flex: 1;
  min-height: 0;
`;

const SidebarWrap = styled.aside`
  display: flex;
  flex-direction: column;
  flex: 0 0 300px;
  background: #222222;
  color: #f7f7f7;
  font-family: ${APP_FONT};
  font-size: 28px;
  font-weight: 500;
`;

const ToolGroup = styled.div`
  & + & {
    border-top: 2px solid #6e6e6e;
  }
`;

const ToolRow = styled.div`
  position: relative;
`;

const Tool = styled.button`
  display: flex;
  align-items: center;
  gap: 20px;
  width: 100%;
  height: 100px;
  padding-left: 22px;
  background: ${(p) => (p.$active ? "#ff457d" : "transparent")};
  color: ${(p) => (p.$active ? "#111111" : "#f7f7f7")};
  white-space: nowrap;
`;

const OptionsPanel = styled.div`
  position: absolute;
  top: 0;
  left: 100%;
  z-index: 1;
  display: flex;
  flex-direction: column;
  align-items: center;
  width: 100px;
  height: 468px;
  padding-top: 20px;
  background: #263238;
`;

const SizeSelectWrap = styled.div`
  position: relative;
  margin-bottom: 50px;
`;

const SizeSelect = styled.select`
  appearance: none;
  width: 68px;
  height: 64px;
  padding-left: 5px;
  border: 3px solid #a9a9a9;
  border-radius: 8px;
  background: linear-gradient(#ffffff 40%, #d4d4d4);
  color: #333333;
  font-size: 28px;
  font-weight: 400;
`;

const SizeCaret = styled.svg`
  position: absolute;
  top: 29px;
  right: 7px;
  pointer-events: none;
`;

const Swatches = styled.div`
  display: flex;
  flex-direction: column;
  align-items: center;
  gap: 10px;
  margin-bottom: 42px;
`;

const Swatch = styled.button`
  width: 64px;
  height: 64px;
  border: 2px solid #8d7f80;
  border-radius: 50%;
  background: ${(p) => p.$color};
  box-shadow: ${(p) => (p.$selected ? "0 0 0 5px #f2477f" : "none")};
`;

const SidebarFooter = styled.div`
  display: flex;
  justify-content: space-between;
  align-items: flex-start;
  height: 130px;
  margin-top: auto;
  padding: 20px 20px 0 0;
  border-top: 2px solid #6e6e6e;
`;

const SideSwitch = styled.div`
  display: flex;
  border-radius: 0 6px 6px 0;
  overflow: hidden;
`;

const SideButton = styled.button`
  display: flex;
  align-items: center;
  justify-content: flex-end;
  width: ${(p) => p.$w}px;
  height: 70px;
  padding-right: 10px;
  background: ${(p) => p.$color};
`;

const CollapseButton = styled.button`
  margin-top: 8px;
`;

const ViewerWrap = styled.section`
  display: grid;
  grid-template-columns: 110px minmax(0, 1632fr) minmax(0, 837fr);
  flex: 1;
  min-width: 0;
  background: #393939;
`;

const Gutter = styled.div`
  border-right: 2px solid #444444;
  background: linear-gradient(90deg, #474747, #393939 10px);
`;

const Sheet = styled.article`
  display: grid;
  grid-template-columns: 704px 1fr;
  grid-template-rows: 445px 452px 1fr;
  padding: 139px 0 0 156px;
  overflow: hidden;
  background: linear-gradient(#ffffff 93%, #eeeeee);
`;

const QuestionWrap = styled.section`
  display: flex;
  align-items: flex-start;
`;

const QuestionNumber = styled.span`
  width: 36px;
  color: #000000;
  font-family: "Liberation Serif", serif;
  font-size: 32px;
  line-height: 34px;
`;

const FigureLabel = styled.text`
  fill: ${(p) => (p.$red ? "#e8141e" : "#000000")};
  font-family: "Liberation Sans", sans-serif;
  font-size: 21px;
`;

const Backdrop = styled.div`
  display: flex;
  align-items: flex-end;
  justify-content: flex-end;
`;

const PageCounter = styled.div`
  display: flex;
  align-items: center;
  gap: 36px;
  padding: 0 48px 10px 0;
  color: #dddddd;
  font-family: ${APP_FONT};
  font-size: 24px;
`;

const PageInput = styled.input`
  width: 14px;
  color: #ffffff;
`;

const DockArea = styled.footer`
  display: flex;
  justify-content: center;
  height: 130px;
  background: linear-gradient(#6a6a6a, #c4c4c4 36%, #ffffff 75%);
`;

const Gradients = styled.svg`
  position: absolute;
`;

const DockShelf = styled.div`
  display: flex;
  align-items: stretch;
  padding: 0 7px;
  border: 1px solid #b5b5b5;
  border-top: 2px solid #989898;
  border-bottom: none;
  border-radius: 10px 10px 0 0;
  background: linear-gradient(#818181, #a7a7a7);
`;

const DockItem = styled.button`
  position: relative;
  display: flex;
  justify-content: center;
  align-items: flex-start;
  width: 104px;
  padding-top: 12px;
`;

const Badge = styled.span`
  position: absolute;
  top: 11px;
  right: 0;
  min-width: 38px;
  height: 38px;
  padding: 0 5px;
  border-radius: 19px;
  background: #f8423f;
  color: #ffffff;
  font-family: ${APP_FONT};
  font-size: 21px;
  line-height: 38px;
`;

const RunningDot = styled.span`
  position: absolute;
  bottom: 4px;
  left: 48px;
  width: 8px;
  height: 8px;
  border-radius: 50%;
  background: #ffffff;
`;

const DockRule = styled.span`
  align-self: flex-start;
  width: 2px;
  height: 96px;
  margin: 16px 22px 0;
  background: #d0d0d0;
`;
